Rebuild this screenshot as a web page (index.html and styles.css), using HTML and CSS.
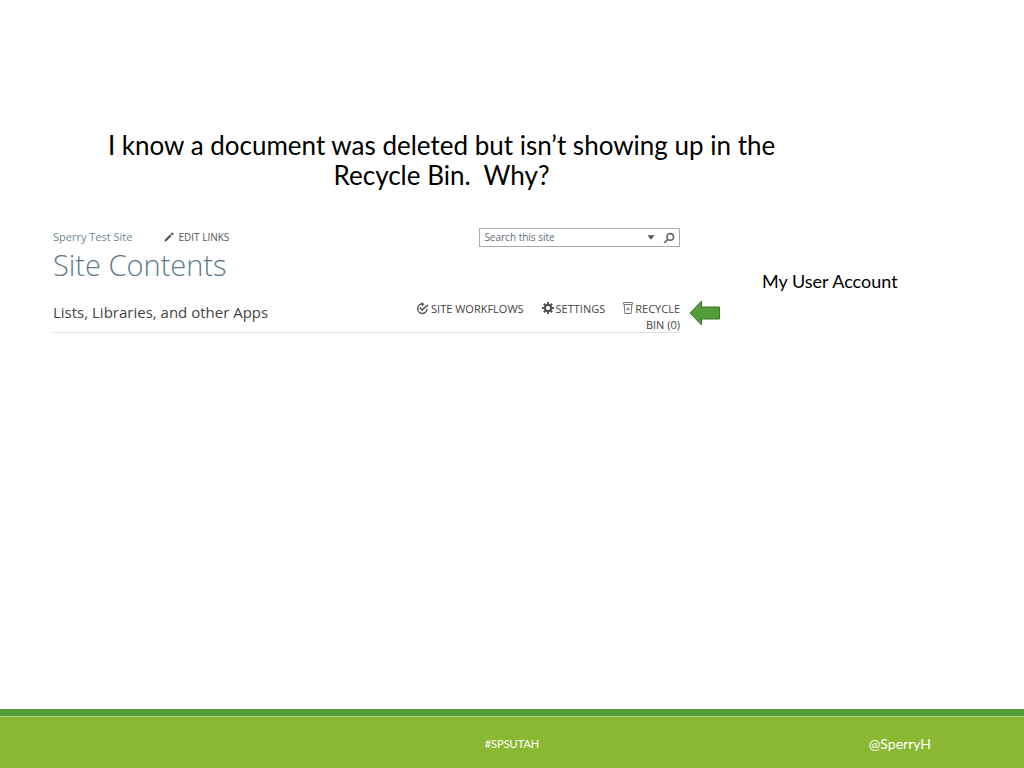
FILE: index.html
```html
<!DOCTYPE html>
<html lang="en">
<head>
    <meta charset="UTF-8">
    <meta name="viewport" content="width=device-width, initial-scale=1.0">
    <title>Recycle Bin</title>
    <link rel="stylesheet" href="styles.css">
</head>
<body>
<main class="slide">
    <h1 class="slide-title">I know a document was deleted but isn’t showing up in the<br>Recycle Bin. &nbsp;Why?</h1>

    <div class="content">
        <!-- SharePoint site contents -->
        <section class="site">
            <div class="top-row">
                <nav class="top-links">
                    <a class="site-link" href="#">Sperry Test Site</a>
                    <a class="edit-link" href="#">
                        <svg width="10" height="10" viewBox="0 0 10 10"><path d="M0.3 9.7 1 7.4 5.9 2.5 7.5 4.1 2.6 9zM6.5 1.9 7.8 0.6Q8.3 0.2 8.8 0.7L9.3 1.2Q9.8 1.7 9.4 2.2L8.1 3.5z" fill="#555"/></svg>
                        EDIT LINKS
                    </a>
                </nav>
                <form class="search">
                    <input type="text" id="search" placeholder="Search this site" aria-label="Search this site">
                    <button type="button" aria-label="Search options">
                        <svg width="8" height="5" viewBox="0 0 8 5"><path d="M0.5 0.3h7L4.4 4.2H3.6z" fill="#555"/></svg>
                    </button>
                    <button type="button" aria-label="Search">
                        <svg width="12" height="12" viewBox="0 0 12 12"><circle cx="7.2" cy="4.9" r="3.3" fill="none" stroke="#666" stroke-width="1.6"/><path d="M4.9 7.3 1.2 10.8" stroke="#666" stroke-width="1.8"/></svg>
                    </button>
                </form>
            </div>
            <h2 class="site-title">Site Contents</h2>
            <div class="apps-row">
                <h3 class="apps-title">Lists, Libraries, and other Apps</h3>
                <nav class="actions">
                    <a href="#">
                        <svg width="13" height="13" viewBox="0 0 13 13" fill="none" stroke="#555"><path d="M6.5 2A4.7 4.7 0 1 0 11 7.2" stroke-width="1.5"/><path d="M5.2 0 8.6 1.9 6 4.4z" fill="#555" stroke="none"/><path d="M3.8 5.6 6.2 8 12 2.8" stroke-width="1.6"/></svg>
                        <span>SITE WORKFLOWS</span>
                    </a>
                    <a href="#">
                        <svg width="12" height="12" viewBox="0 0 12 12" fill="none" stroke="#555"><circle cx="6" cy="6" r="3.1" stroke-width="2.2"/><path d="M6 0v2.4M6 9.6V12M0 6h2.4M9.6 6H12M1.8 1.8l1.7 1.7M8.5 8.5l1.7 1.7M10.2 1.8 8.5 3.5M3.5 8.5l-1.7 1.7" stroke-width="2"/></svg>
                        <span>SETTINGS</span>
                    </a>
                    <a class="recycle" href="#">
                        <svg width="10" height="12" viewBox="0 0 10 12" fill="none" stroke="#777"><rect x="0.5" y="0.5" width="9" height="2" rx="0.5"/><path d="M1.2 2.5 1.8 11.5H8.2L8.8 2.5"/><path d="M3.6 7.8 5 5.5 6.4 7.8z" stroke-width="0.9"/></svg>
                        <span>RECYCLE<br>BIN (0)</span>
                    </a>
                </nav>
            </div>
        </section>

        <svg class="arrow" width="32" height="26" viewBox="0 0 32 26"><path d="M1 13 12.5 1V7H30.5V19H12.5V25z" fill="#549e39" stroke="#3c7328"/></svg>

        <p class="account">My User Account</p>
    </div>
</main>

<footer class="footer">
    <span class="hashtag">#SPSUTAH</span>
    <span class="handle">@SperryH</span>
</footer>
</body>
</html>
```
FILE: styles.css
```css
* {
    box-sizing: border-box;
}
body {
    margin: 0;
    min-height: 100vh;
    display: flex;
    flex-direction: column;
    font-family: Lato, sans-serif;
    color: #000;
    background-color: #fff;
}
h1, h2, h3, p {
    margin: 0;
    font-weight: normal;
}
a {
    color: inherit;
    text-decoration: none;
}
svg {
    flex: none;
}
.slide {
    flex: 1;
    padding: 130px 52px 0 53px;
}
.slide-title {
    width: 85%;
    padding-right: 4px;
    font-size: 26px;
    line-height: 30px;
    text-align: center;
    white-space: nowrap;
}
.content {
    display: grid;
    grid-template-columns: 627fr 32px 242fr;
    column-gap: 9px;
    margin-top: 38px;
}
.site {
    font-family: "Open Sans", sans-serif;
    font-size: 10px;
    color: #555;
    border-bottom: 1px solid #e0e0e0;
}
.top-row {
    display: flex;
    justify-content: space-between;
    height: 19px;
}
.top-links {
    display: flex;
    align-items: center;
    gap: 32px;
    padding-bottom: 2px;
}
.site-link {
    font-size: 11px;
    color: #6f8797;
}
.edit-link {
    display: flex;
    align-items: center;
    gap: 4px;
}
.search {
    display: flex;
    align-items: center;
    width: 32%;
    border: 1px solid #ababab;
}
.search input {
    flex: 1;
    min-width: 0;
    padding: 0 4px 2px;
    border: none;
    outline: none;
    background: none;
    font: inherit;
}
.search input::placeholder {
    color: #5f6b75;
}
.search button {
    display: flex;
    padding: 0 4px;
    border: none;
    background: none;
    cursor: pointer;
}
.site-title {
    font-size: 29px;
    font-weight: 300;
    line-height: 36px;
    color: #5d7a8c;
}
.apps-row {
    display: flex;
    justify-content: space-between;
    margin-top: 18px;
    line-height: 16px;
}
.apps-title {
    margin-top: 3px;
    font-size: 15px;
    color: #444;
}
.actions {
    display: flex;
    gap: 18px;
    height: 31px;
    font-size: 11px;
    color: #444;
}
.actions a {
    display: flex;
    gap: 2px;
}
.actions svg {
    margin-top: 1px;
}
.recycle {
    text-align: right;
}
.arrow {
    align-self: end;
    margin-bottom: 7px;
}
.account {
    margin: 42px 0 0 32px;
    font-size: 18px;
    line-height: 22px;
}
.footer {
    display: grid;
    grid-template-columns: 1fr 1fr 1fr;
    align-items: center;
    height: 59px;
    padding-top: 2px;
    border-top: 7px solid #549e39;
    box-shadow: inset 0 1px #a9d48b;
    background-color: #8ab833;
    color: #fff;
}
.hashtag {
    grid-column: 2;
    text-align: center;
    font-size: 11px;
}
.handle {
    padding-right: 93px;
    text-align: right;
    font-size: 14px;
}
```
